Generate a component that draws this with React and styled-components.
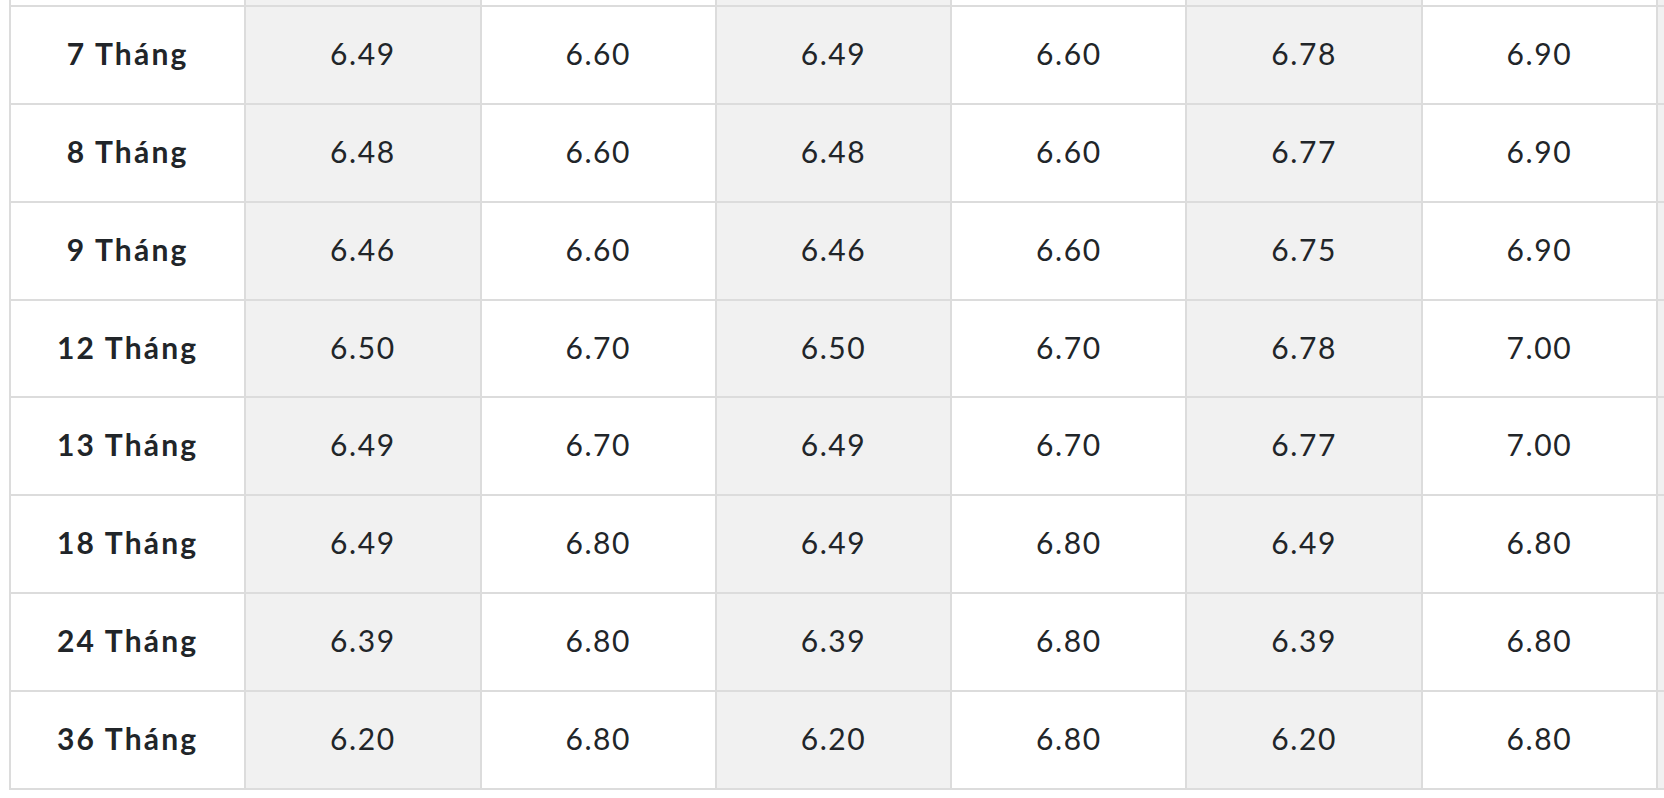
import React from 'react';
import styled, { createGlobalStyle } from 'styled-components';

// --- Global ---
const GlobalStyle = createGlobalStyle`
  html, body {
    margin: 0;
    padding: 0;
    background: #ffffff;
  }
  body {
    font-family: 'Lato', 'Open Sans', sans-serif;
    color: #212529;
  }
`;

// --- Data ---
// first row sits above the fold, only its lower edge shows;
// the last column is cut by the right edge of the page
const rows = [
  { term: '', rates: ['', '', '', '', '', ''] },
  { term: '7 Tháng', rates: ['6.49', '6.60', '6.49', '6.60', '6.78', '6.90'] },
  { term: '8 Tháng', rates: ['6.48', '6.60', '6.48', '6.60', '6.77', '6.90'] },
  { term: '9 Tháng', rates: ['6.46', '6.60', '6.46', '6.60', '6.75', '6.90'] },
  { term: '12 Tháng', rates: ['6.50', '6.70', '6.50', '6.70', '6.78', '7.00'] },
  { term: '13 Tháng', rates: ['6.49', '6.70', '6.49', '6.70', '6.77', '7.00'] },
  { term: '18 Tháng', rates: ['6.49', '6.80', '6.49', '6.80', '6.49', '6.80'] },
  { term: '24 Tháng', rates: ['6.39', '6.80', '6.39', '6.80', '6.39', '6.80'] },
  { term: '36 Tháng', rates: ['6.20', '6.80', '6.20', '6.80', '6.20', '6.80'] },
];

// --- Styled Components ---
const Viewport = styled.div`
  width: 100vw;
  height: 798px;
  overflow: hidden;
`;

const RateTable = styled.table`
  margin: -93px 0 0 9px;
  border-collapse: separate;
  border-spacing: 0;
  table-layout: fixed;
  width: 1884px;
  border-top: 2px solid #dcdcdc;
  border-left: 2px solid #dcdcdc;
`;

const Cell = styled.td`
  box-sizing: border-box;
  width: 235.3px;
  height: 97.9px;
  padding: 0 0 4px;
  text-align: center;
  vertical-align: middle;
  font-size: 30px;
  font-weight: ${(p) => (p.$label ? 700 : 400)};
  letter-spacing: ${(p) => (p.$label ? '2.2px' : '1.6px')};
  background: ${(p) => (p.$shade ? '#f1f1f1' : '#ffffff')};
  border-right: 2px solid #dcdcdc;
  border-bottom: 2px solid #dcdcdc;
`;

// --- Main Component ---
const App = () => (
  <>
    <GlobalStyle />
    <Viewport>
      <RateTable>
        <tbody>
          {rows.map((row, r) => (
            <tr key={r}>
              <Cell $label>{row.term}</Cell>
              {row.rates.map((rate, i) => (
                <Cell key={i} $shade={i % 2 === 0}>
                  {rate}
                </Cell>
              ))}
              <Cell $shade />
            </tr>
          ))}
        </tbody>
      </RateTable>
    </Viewport>
  </>
);

export default App;
